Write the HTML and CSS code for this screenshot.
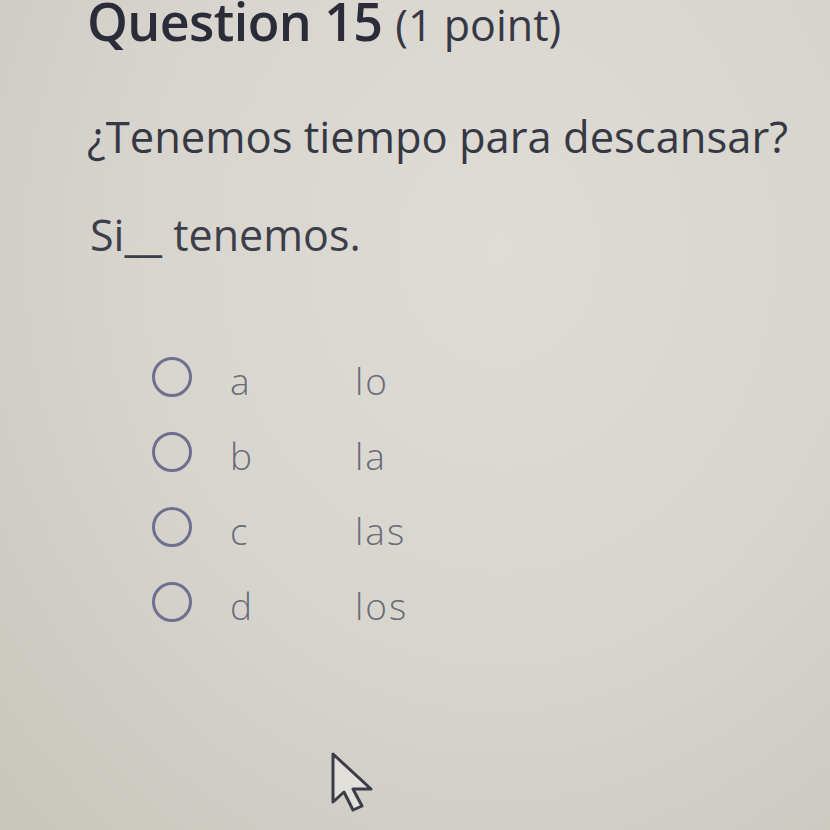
FILE: index.html
```html
<!DOCTYPE html>
<html>
<head>
<meta charset="utf-8">
<link rel="stylesheet" href="styles.css">
</head>
<body>
<div class="page">
  <h1 class="title">Question 15 <span class="pts">(1 point)</span></h1>
  <p class="question">¿Tenemos tiempo para descansar?</p>
  <p class="prompt">Si__ tenemos.</p>
  <div class="options">
    <div class="opt"><span class="radio"></span><span class="letter">a</span><span class="ans">lo</span></div>
    <div class="opt"><span class="radio"></span><span class="letter">b</span><span class="ans">la</span></div>
    <div class="opt"><span class="radio"></span><span class="letter">c</span><span class="ans">las</span></div>
    <div class="opt"><span class="radio"></span><span class="letter">d</span><span class="ans">los</span></div>
  </div>
  <div class="cursor-row">
    <svg class="cursor" width="50" height="64" viewBox="0 0 50 64">
      <path d="M4 4 L4 52 L15 42 L24 60 L33 56 L24 39 L42 39 Z" fill="#e2e0db" stroke="#3a3c48" stroke-width="3" stroke-linejoin="round"/>
    </svg>
  </div>
</div>
</body>
</html>
```

FILE: styles.css
```css
html, body {
  margin: 0;
  padding: 0;
}
body {
  width: 830px;
  height: 830px;
  overflow: hidden;
  background: radial-gradient(ellipse at 60% 30%, #dfdcd5 0%, #d8d5ce 50%, #c8c5bd 100%);
  font-family: "Open Sans", "DejaVu Sans", sans-serif;
}
.page {
  padding-left: 87px;
}
.title {
  margin: -2px 0 0 0;
  font-size: 52px;
  font-weight: 600;
  color: #2a2c3a;
  letter-spacing: -0.6px;
  line-height: 46px;
  white-space: nowrap;
}
.pts {
  font-size: 43px;
  font-weight: 400;
  color: #363846;
  letter-spacing: 0;
}
.question {
  margin: 61px 0 0 0;
  font-size: 43.5px;
  line-height: 56px;
  color: #363844;
  white-space: nowrap;
}
.prompt {
  margin: 42px 0 0 3px;
  font-size: 43px;
  line-height: 56px;
  color: #3c3e4a;
}
.options {
  margin: 94px 0 0 65px;
  display: flex;
  flex-direction: column;
  gap: 35px;
}
.opt {
  display: flex;
  align-items: flex-start;
  height: 40px;
}
.radio {
  width: 34px;
  height: 34px;
  border: 3px solid #6e7090;
  border-radius: 50%;
  flex: none;
}
.letter,
.ans {
  font-size: 37px;
  font-weight: 300;
  color: #6a6c77;
  line-height: 40px;
  padding-top: 4px;
  letter-spacing: 2px;
}
.letter {
  margin-left: 38px;
  width: 125px;
}
.cursor-row {
  margin: 128px 0 0 242px;
}
.cursor {
  display: block;
}
```
